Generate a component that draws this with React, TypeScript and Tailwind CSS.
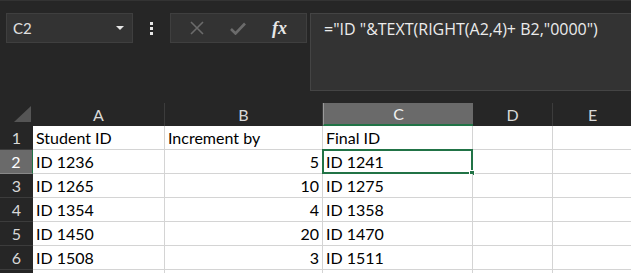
import React from 'react';

const rows = [
  ['Student ID', 'Increment by', 'Final ID'],
  ['ID 1236', '5', 'ID 1241'],
  ['ID 1265', '10', 'ID 1275'],
  ['ID 1354', '4', 'ID 1358'],
  ['ID 1450', '20', 'ID 1470'],
  ['ID 1508', '3', 'ID 1511'],
  ['', '', ''],
];

const cols = ['A', 'B', 'C', 'D', 'E'];

export default function App() {
  return (
    <div className="w-[631px] h-[273px] overflow-hidden bg-[#262626] font-['Lato','Liberation_Sans',sans-serif] border-t border-[#333]">
      {/* toolbar */}
      <div className="flex items-start h-[102px] pt-[12px] pl-[6px]">
        <div className="w-[127px] h-[30px] bg-[#333] border border-[#3f3f3f] flex items-center justify-between pl-[6px] pr-[8px]">
          <span className="text-[15px] text-[#e0e0e0]">C2</span>
          <svg width="8" height="5" viewBox="0 0 8 5"><path d="M0 0h8L4 4z" fill="#e6e6e6" /></svg>
        </div>
        <div className="w-[37px] h-[30px] flex flex-col items-center justify-center gap-[2px]">
          <div className="w-[3px] h-[3px] bg-[#e6e6e6]" />
          <div className="w-[3px] h-[3px] bg-[#e6e6e6]" />
          <div className="w-[3px] h-[3px] bg-[#e6e6e6]" />
        </div>
        <div className="w-[137px] h-[30px] bg-[#333] border border-[#3f3f3f] flex items-center justify-around px-[6px]">
          <svg width="14" height="14" viewBox="0 0 14 14"><path d="M1 1l12 12M13 1L1 13" stroke="#6b6b6b" strokeWidth="1.6" /></svg>
          <svg width="16" height="13" viewBox="0 0 16 13"><path d="M1 7l4.5 4.5L15 1.5" stroke="#6b6b6b" strokeWidth="2.6" fill="none" /></svg>
          <span className="font-['Liberation_Serif',serif] italic font-bold text-[18px] text-[#e6e6e6] leading-none">fx</span>
        </div>
        <div className="ml-[3px] flex-1 h-[78px] bg-[#333] border border-[#444] -mr-[4px] pl-[13px] pt-[3px]">
          <span className="font-['Open_Sans',sans-serif] text-[16px] text-[#ececec] whitespace-nowrap">="ID "&TEXT(RIGHT(A2,4)+ B2,"0000")</span>
        </div>
      </div>

      {/* sheet */}
      <div className="grid grid-cols-[33px_132px_158px_150px_80px_80px] grid-rows-[23px_repeat(7,24px)]">
        <div className="bg-[#262626] flex items-end justify-end pr-[2px] pb-[4px]">
          <svg width="17" height="16" viewBox="0 0 17 16"><path d="M17 0v16H0z" fill="#555" /></svg>
        </div>
        {cols.map((c) => (
          <div
            key={c}
            className={
              c === 'C'
                ? 'bg-[#6a6a6a] border-l border-[#9a9a9a] border-b-2 border-b-[#217346] flex items-center justify-center text-[16px] text-[#f0f0f0]'
                : 'bg-[#262626] border-r border-[#3c3c3c] flex items-center justify-center text-[16px] text-[#d8d8d8]'
            }
          >
            {c}
          </div>
        ))}
        {rows.map((r, i) => (
          <React.Fragment key={i}>
            <div
              className={
                i === 1
                  ? 'bg-[#6a6a6a] border-r border-[#217346] border-b border-b-[#888] flex items-center justify-center text-[16px] text-white'
                  : 'bg-[#262626] border-b border-[#3c3c3c] flex items-center justify-center text-[16px] text-[#d8d8d8]'
              }
            >
              {i < 6 ? i + 1 : ''}
            </div>
            <div className="bg-white border-r border-b border-[#d4d4d4] flex items-center pl-[3px] text-[16px] text-black whitespace-nowrap">{r[0]}</div>
            <div
              className={
                i === 0
                  ? 'bg-white border-r border-b border-[#d4d4d4] flex items-center pl-[3px] text-[16px] text-black whitespace-nowrap'
                  : 'bg-white border-r border-b border-[#d4d4d4] flex items-center justify-end pr-[3px] text-[16px] text-black whitespace-nowrap'
              }
            >
              {r[1]}
            </div>
            <div className="relative bg-white border-r border-b border-[#d4d4d4] flex items-center pl-[3px] text-[16px] text-black whitespace-nowrap">
              {r[2]}
              {i === 1 && (
                <>
                  <div className="absolute -left-[1px] -top-[1px] -right-[1px] -bottom-[1px] border-2 border-[#217346]" />
                  <div className="absolute -right-[3px] -bottom-[3px] w-[6px] h-[6px] bg-[#217346] border border-white" />
                </>
              )}
            </div>
            <div className="bg-white border-r border-b border-[#d4d4d4]" />
            <div className="bg-white border-r border-b border-[#d4d4d4]" />
          </React.Fragment>
        ))}
      </div>
    </div>
  );
}
